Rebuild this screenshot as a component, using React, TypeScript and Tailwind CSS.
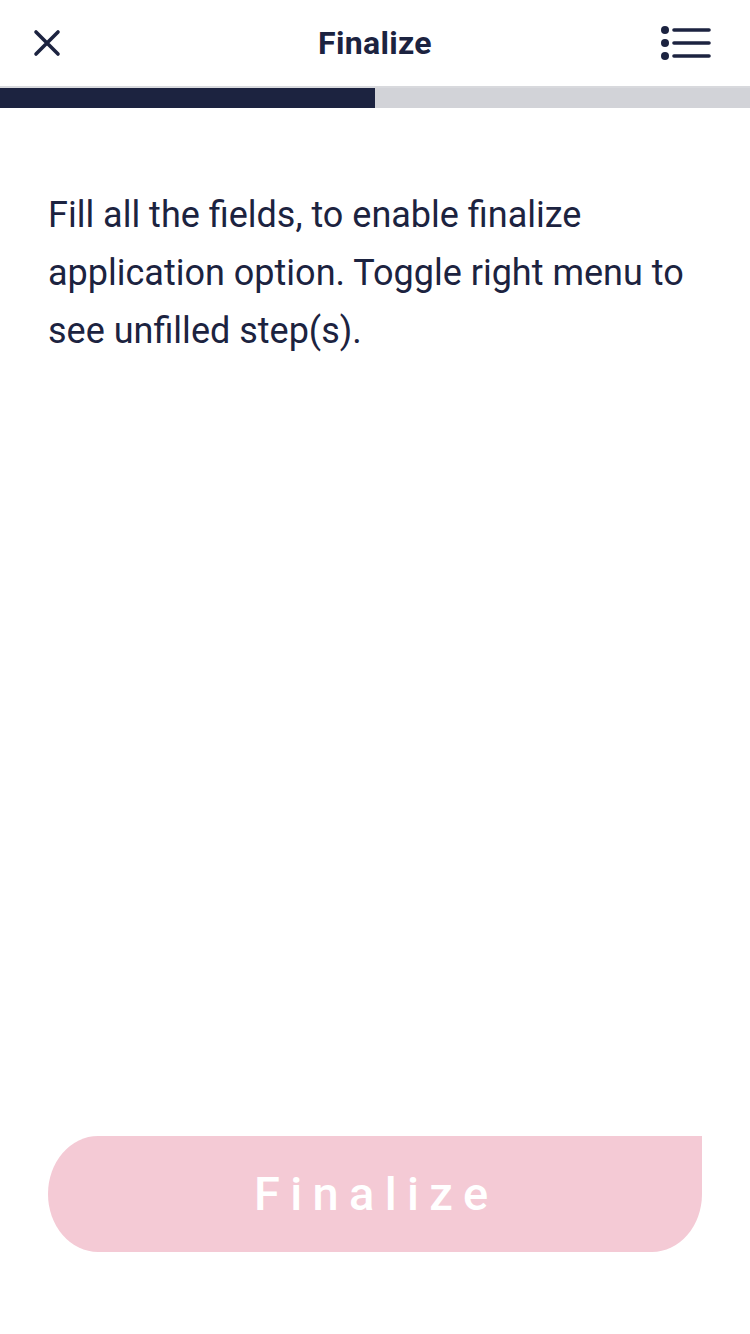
import React from "react";

export default function App() {
  return (
    <div className="w-[750px] h-[1334px] bg-white flex flex-col" style={{ fontFamily: "Roboto, 'Noto Sans', sans-serif" }}>
      <header className="h-[86px] flex items-center justify-between px-[30px] relative">
        <svg width="32" height="32" viewBox="0 0 32 32" className="ml-[1px]">
          <path d="M5 5 L27 27 M27 5 L5 27" stroke="#1c2340" strokeWidth="3.6" strokeLinecap="round" />
        </svg>
        <h1 className="absolute left-0 right-0 text-center text-[32px] font-bold tracking-[0.01em] text-[#1c2340] pointer-events-none">Finalize</h1>
        <svg width="52" height="36" viewBox="0 0 52 36" className="mr-[8px]">
          <circle cx="5" cy="5" r="4" fill="#1c2340" />
          <circle cx="5" cy="18" r="4" fill="#1c2340" />
          <circle cx="5" cy="31" r="4" fill="#1c2340" />
          <path d="M14 5 H49 M14 18 H49 M14 31 H49" stroke="#1c2340" strokeWidth="3.6" strokeLinecap="round" />
        </svg>
      </header>
      <div className="h-[2px] bg-[#d8d9dd]" />
      <div className="h-[20px] flex bg-[#d2d3d8]">
        <div className="w-1/2 bg-[#1c2340]" />
      </div>
      <p className="mt-[78px] px-[48px] text-[36px] leading-[58px] text-[#1c2340]">
        Fill all the fields, to enable finalize application option. Toggle right menu to see unfilled step(s).
      </p>
      <div className="flex-1" />
      <div className="px-[48px] mb-[82px]">
        <button className="w-full h-[116px] bg-[#f4cad5] rounded-tl-[50px_58px] rounded-bl-[50px_58px] rounded-br-[50px_58px] rounded-tr-none text-white text-[47px] font-medium tracking-[0.22em] flex items-center justify-center">
          <span className="pl-[0.05em]">Finalize</span>
        </button>
      </div>
    </div>
  );
}
